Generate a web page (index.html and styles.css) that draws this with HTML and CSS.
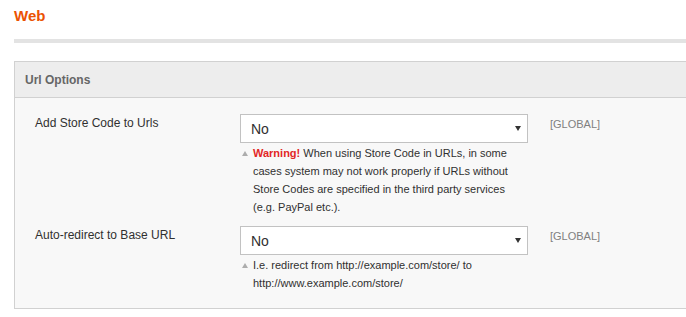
FILE: index.html
```html
<!DOCTYPE html>
<html>
    <head>
        <title>Web</title>
        <link rel="stylesheet" href="styles.css">
    </head>
    <body>
        <div class="page">
            <h1 class="page-title">Web</h1>
            <div class="divider"></div>

            <div class="section">
                <div class="section-head">Url Options</div>
                <div class="section-body">
                    <div class="field">
                        <label class="field-label" for="store-code">Add Store Code to Urls</label>
                        <div class="field-control">
                            <div class="select-wrap">
                                <select id="store-code" class="select">
                                    <option>No</option>
                                    <option>Yes</option>
                                </select>
                            </div>
                            <p class="note"><span class="warn">Warning!</span> When using Store Code in URLs, in some cases system may not work properly if URLs without Store Codes are specified in the third party services (e.g. PayPal etc.).</p>
                        </div>
                        <div class="scope">[GLOBAL]</div>
                    </div>

                    <div class="field">
                        <label class="field-label" for="redirect">Auto-redirect to Base URL</label>
                        <div class="field-control">
                            <div class="select-wrap">
                                <select id="redirect" class="select">
                                    <option>No</option>
                                    <option>Yes (302 Found)</option>
                                    <option>Yes (301 Moved Permanently)</option>
                                </select>
                            </div>
                            <p class="note">I.e. redirect from http://example.com/store/ to http://www.example.com/store/</p>
                        </div>
                        <div class="scope">[GLOBAL]</div>
                    </div>
                </div>
            </div>
        </div>
    </body>
</html>
```

FILE: styles.css
```css
* {box-sizing: border-box}

body {
  margin: 0;
  font-family: "Liberation Sans", Arial, sans-serif;
  color: #303030;
  background: #fff;
  overflow: hidden;
}

.page {
  padding: 7px 0 0 14px;
}

.page-title {
  margin: 0;
  font-size: 15px;
  line-height: 18px;
  font-weight: bold;
  color: #eb5202;
}

.divider {
  height: 4px;
  margin-top: 14px;
  background: #e3e3e3;
}

/* Fieldset box */
.section {
  margin-top: 18px;
  border: 1px solid #d1d1d1;
  border-right: none;
  background: #f8f8f8;
}

.section-head {
  height: 36px;
  padding: 0 10px;
  line-height: 36px;
  font-size: 12px;
  font-weight: bold;
  color: #666;
  background: #ededed;
  border-bottom: 1px solid #d1d1d1;
}

.section-body {
  padding: 16px 0 16px 20px;
}

.field {
  display: grid;
  grid-template-columns: 205px 288px auto;
}

.field + .field {
  margin-top: 10px;
}

.field-label {
  padding-top: 1px;
  font-size: 12px;
  line-height: 16px;
}

.select-wrap {
  position: relative;
}

.select-wrap::after {
  content: "";
  position: absolute;
  right: 7px;
  top: 12px;
  border-left: 3px solid transparent;
  border-right: 3px solid transparent;
  border-top: 5px solid #333;
}

.select {
  display: block;
  width: 100%;
  height: 29px;
  padding: 0 24px 0 10px;
  font-family: inherit;
  font-size: 14px;
  color: #303030;
  background: #fff;
  border: 1px solid #c2c2c2;
  border-radius: 0;
  appearance: none;
  -webkit-appearance: none;
}

.note {
  position: relative;
  margin: 1px 0 0;
  padding-left: 13px;
  padding-right: 20px;
  font-size: 11px;
  line-height: 18px;
}

.note::before {
  content: "";
  position: absolute;
  left: 2px;
  top: 7px;
  border-left: 3px solid transparent;
  border-right: 3px solid transparent;
  border-bottom: 5px solid #adadad;
}

.warn {
  color: #e22626;
  font-weight: bold;
}

.scope {
  margin-left: 22px;
  padding-top: 3px;
  font-size: 11px;
  line-height: 14px;
  color: #808080;
}
```
